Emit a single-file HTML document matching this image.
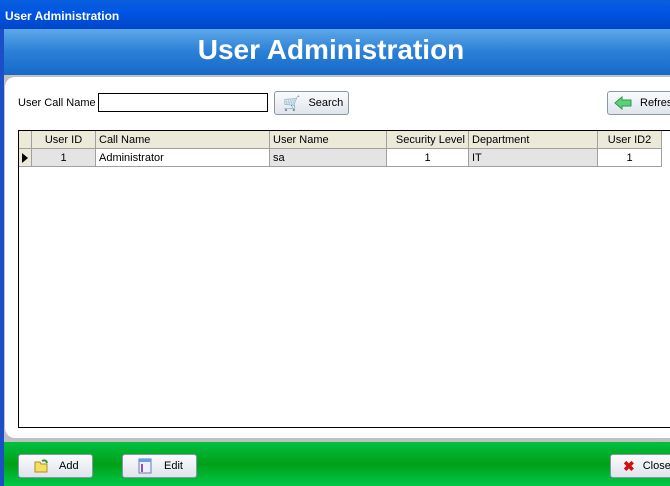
<!DOCTYPE html>
<html><head><style>
*{margin:0;padding:0;box-sizing:border-box}
body{width:670px;height:486px;overflow:hidden;position:relative;font-family:"Liberation Sans",sans-serif;font-size:11px;background:#d4d0c8}
.abs{position:absolute}
.tb{left:0;top:0;width:670px;height:29px;background:linear-gradient(#0a5fdc,#0055e5 40%,#0046c8);color:#fff;font-weight:bold;font-size:12px;padding:9px 0 0 5px}
.hd{left:0;top:29px;width:670px;height:46px;background:linear-gradient(#5ea8e8,#2a7fd6 50%,#1769c8);border-left:4px solid #1a4fc8;color:#fff;font-weight:bold;font-size:28px;text-align:center;padding-top:5px;padding-right:12px}
.mid{left:0;top:75px;width:670px;height:367px;background:#c0c0c0;border-left:4px solid #1a4fc8}
.pan{left:5px;top:77px;width:680px;height:361px;background:#fff;border-radius:10px 0 0 10px}
.ft{left:0;top:442px;width:670px;height:44px;background:linear-gradient(#00c040,#00a018 50%,#00c848);border-left:4px solid #1a4fc8}
.btn{position:absolute;height:24px;border:1px solid #8a96a6;border-radius:3px;background:linear-gradient(#fafbfd,#dfe4ec);font-size:11px;display:flex;align-items:center}
.inp{left:98px;top:93px;width:170px;height:19px;border:1px solid #000;background:#fff}
.grid{left:18px;top:130px;width:660px;height:298px;border:1px solid #000;background:#fff}
.c{position:absolute;height:18px;line-height:19px;border-right:1px solid #a0a0a0;border-bottom:1px solid #a0a0a0;padding:0 3px;white-space:nowrap;overflow:hidden}
.h{background:#ebe9d8;top:0}
.r{top:18px;background:#fff}
.g{background:#e4e4e4}
</style></head><body>
<div class="abs tb">User Administration</div>
<div class="abs hd">User Administration</div>
<div class="abs mid"></div>
<div class="abs pan"></div>
<div class="abs" style="left:18px;top:97px">User Call Name</div>
<div class="abs inp"></div>
<div class="btn" style="left:274px;top:91px;width:75px"><span style="margin-left:8px;color:#4a6a88;font-size:14px">🛒</span><span style="margin-left:8px">Search</span></div>
<div class="btn" style="left:607px;top:91px;width:80px"><svg width="18" height="14" style="margin-left:6px"><path d="M1 7 L8 1 V4 H17 V10 H8 V13 Z" fill="#5fd07a" stroke="#2a9a4a"/></svg><span style="margin-left:8px">Refresh</span></div>
<div class="abs grid">
<div class="c h" style="left:0;width:13px"></div>
<div class="c h" style="left:13px;width:64px;text-align:center">User ID</div>
<div class="c h" style="left:77px;width:174px">Call Name</div>
<div class="c h" style="left:251px;width:117px">User Name</div>
<div class="c h" style="left:368px;width:82px;text-align:right">Security Level</div>
<div class="c h" style="left:450px;width:129px">Department</div>
<div class="c h" style="left:579px;width:64px;text-align:center">User ID2</div>
<div class="c r" style="left:0;width:13px;background:#ebe9d8"><svg width="6" height="10" style="margin-top:4px"><path d="M0 0 L6 5 L0 10Z" fill="#000"/></svg></div>
<div class="c r g" style="left:13px;width:64px;text-align:center">1</div>
<div class="c r" style="left:77px;width:174px">Administrator</div>
<div class="c r g" style="left:251px;width:117px">sa</div>
<div class="c r" style="left:368px;width:82px;text-align:center">1</div>
<div class="c r g" style="left:450px;width:129px">IT</div>
<div class="c r" style="left:579px;width:64px;text-align:center">1</div>
</div>
<div class="abs ft"></div>
<div class="btn" style="left:18px;top:454px;width:75px"><svg width="16" height="16" style="margin-left:14px"><path d="M2 4 H7 L8 6 H14 V14 H2Z" fill="#f4e060" stroke="#b09020"/><path d="M9 3 Q13 1 14 5" stroke="#2a9a2a" fill="none" stroke-width="2"/></svg><span style="margin-left:10px">Add</span></div>
<div class="btn" style="left:122px;top:454px;width:75px"><svg width="14" height="16" style="margin-left:15px"><rect x="1" y="1" width="12" height="14" fill="#eef" stroke="#6080b0"/><rect x="1" y="1" width="12" height="3" fill="#6aa0e0"/><rect x="3" y="6" width="2" height="8" fill="#9050c0"/></svg><span style="margin-left:12px">Edit</span></div>
<div class="btn" style="left:610px;top:454px;width:80px"><span style="margin-left:12px;color:#d01010;font-weight:bold;font-size:14px">✖</span><span style="margin-left:8px">Close</span></div>
</body></html>
